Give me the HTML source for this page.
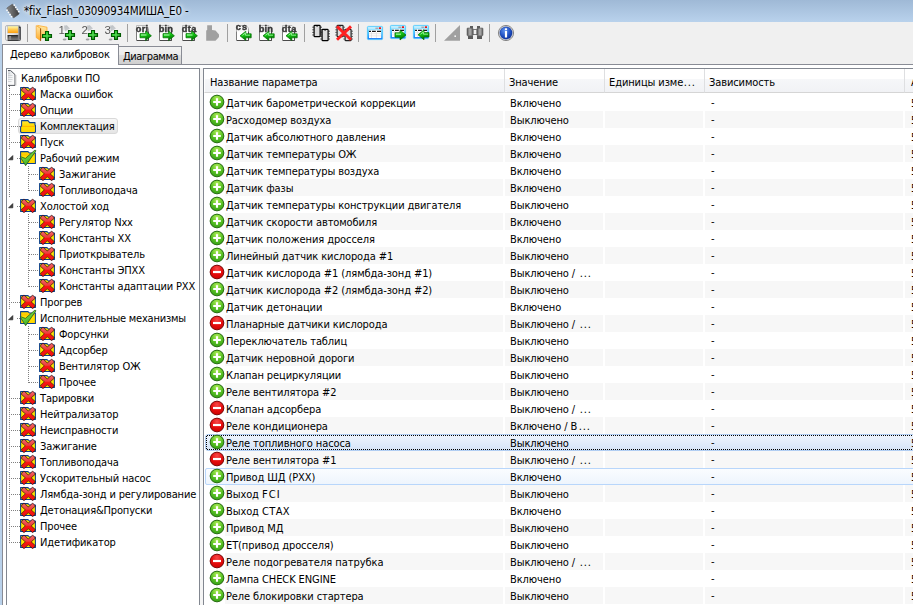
<!DOCTYPE html><html lang="ru"><head><meta charset="utf-8"><title>fix_Flash</title><style>
*{box-sizing:border-box}
html,body{margin:0;padding:0}
body{width:913px;height:605px;overflow:hidden;background:#f0f0f0;position:relative;font-family:"DejaVu Sans Condensed","Liberation Sans",sans-serif;font-size:11px;color:#000;letter-spacing:-0.15px;line-height:13px}
.abs{position:absolute}
#title{left:0;top:0;width:913px;height:22px;background:linear-gradient(#9fb9d6,#b9d2ec)}
#lb{left:0;top:22px;width:2px;height:583px;background:#b9d1ea}
#ttext{left:24px;top:4px;font-family:"DejaVu Sans Condensed","Liberation Sans",sans-serif;font-size:11.5px;letter-spacing:-0.12px;line-height:15px;white-space:nowrap;text-shadow:0 0 4px #fff,0 0 6px #fff}
.sep{position:absolute;top:24px;width:1px;height:18px;background:#a0a0a0}
.tb{position:absolute;top:25px;width:16px;height:16px}
#page{left:2px;top:64px;width:920px;height:560px;background:#fff;border:1px solid #898c95}
#tab1{left:2px;top:44px;width:117px;height:21px;background:#fff;border:1px solid #898c95;border-bottom:none}
#tab2{left:118px;top:46px;width:64px;height:18px;border:1px solid #898c95;border-bottom:none;background:linear-gradient(#f2f2f2 0,#ebebeb 50%,#dddddd 50%,#cfcfcf 100%)}
.tt{position:absolute;white-space:nowrap}
#tree{left:6px;top:68px;width:194px;height:560px;border:1px solid #828790;background:#fff;overflow:hidden}
#list{letter-spacing:-0.1px;left:203px;top:68px;width:730px;height:560px;border:1px solid #828790;background:#fff;overflow:hidden}
.ti{position:absolute;height:16px;white-space:nowrap;line-height:16px;margin:1px 0 0 -1px}
.ic{position:absolute;display:block}
.li{position:absolute;display:block;left:5px}
.hd{position:absolute;top:0;height:24px;background:linear-gradient(#fff 0,#fff 43%,#f6f7f9 43%,#f1f2f5 100%);border-bottom:1px solid #d5d5d5;border-left:1px solid #dedfe1;padding:7px 0 0 4px;white-space:nowrap;overflow:hidden}
.row{position:absolute;left:0;height:17px;width:720px}
.c{position:absolute;top:0;height:17px;padding-top:3px;white-space:nowrap;overflow:hidden}
.alt .c{background:#f7f7f7}
.el{letter-spacing:.85px;margin-left:1.6px}
.vl{position:absolute;width:1px;background-image:linear-gradient(#808080 50%,transparent 50%);background-size:1px 2px}
.hl{position:absolute;height:1px;background-image:linear-gradient(90deg,#808080 50%,transparent 50%);background-size:2px 1px}
</style></head><body>
<svg width="0" height="0" style="position:absolute"><defs><radialGradient id="gp" cx=".5" cy=".25" r=".8"><stop offset="0" stop-color="#b4ee5a"/><stop offset=".5" stop-color="#5cc326"/><stop offset="1" stop-color="#2f9a12"/></radialGradient><radialGradient id="gm" cx=".5" cy=".25" r=".8"><stop offset="0" stop-color="#f64a4a"/><stop offset=".5" stop-color="#e80e0e"/><stop offset="1" stop-color="#c80000"/></radialGradient><linearGradient id="gfl" x1="0" y1="0" x2="1" y2="0"><stop offset="0" stop-color="#f6f6f6"/><stop offset=".55" stop-color="#d0d2d6"/><stop offset="1" stop-color="#5e5e62"/></linearGradient><linearGradient id="gor" x1="0" y1="0" x2="0" y2="1"><stop offset="0" stop-color="#ffffb4"/><stop offset=".5" stop-color="#ffc850"/><stop offset="1" stop-color="#ff9c08"/></linearGradient><linearGradient id="gdk" x1="0" y1="0" x2="0" y2="1"><stop offset="0" stop-color="#1c1c1c"/><stop offset=".3" stop-color="#4a4a4a"/><stop offset=".8" stop-color="#7a7a7a"/><stop offset="1" stop-color="#202020"/></linearGradient><linearGradient id="gfo" x1="0" y1="0" x2="0" y2="1"><stop offset="0" stop-color="#ffe9a8"/><stop offset="1" stop-color="#ffa826"/></linearGradient><linearGradient id="gfb" x1="0" y1="0" x2="0" y2="1"><stop offset="0" stop-color="#ffe6a0"/><stop offset="1" stop-color="#ffc45a"/></linearGradient><linearGradient id="ggr" x1="0" y1="0" x2="1" y2="1"><stop offset="0" stop-color="#30e430"/><stop offset=".5" stop-color="#0cb40c"/><stop offset="1" stop-color="#006400"/></linearGradient><linearGradient id="gwin" x1="0" y1="0" x2="0" y2="1"><stop offset="0" stop-color="#a8eaff"/><stop offset=".5" stop-color="#48c4ff"/><stop offset="1" stop-color="#1c78f8"/></linearGradient><linearGradient id="gbn" x1="0" y1="0" x2="1" y2="0"><stop offset="0" stop-color="#5a5a5a"/><stop offset=".5" stop-color="#b0b0b0"/><stop offset="1" stop-color="#626262"/></linearGradient><radialGradient id="ginf" cx=".4" cy=".3" r=".8"><stop offset="0" stop-color="#5c90ee"/><stop offset=".6" stop-color="#1c4cc0"/><stop offset="1" stop-color="#0c2c90"/></radialGradient><linearGradient id="gpg" x1="0" y1="0" x2="1" y2="1"><stop offset="0" stop-color="#c2c8ce"/><stop offset=".5" stop-color="#f4f5f6"/><stop offset="1" stop-color="#ffffff"/></linearGradient><linearGradient id="gchk" x1="0" y1="0" x2=".6" y2="1"><stop offset="0" stop-color="#b4f45c"/><stop offset=".5" stop-color="#68d03a"/><stop offset="1" stop-color="#36a020"/></linearGradient><linearGradient id="gx" x1="0" y1="0" x2="0" y2="1"><stop offset="0" stop-color="#f26a6a"/><stop offset=".45" stop-color="#ee3a3a"/><stop offset=".55" stop-color="#f81414"/><stop offset="1" stop-color="#f01010"/></linearGradient><linearGradient id="gfy" x1="0" y1="0" x2="0" y2="1"><stop offset="0" stop-color="#ffe83a"/><stop offset=".42" stop-color="#ffd800"/><stop offset=".5" stop-color="#ffb400"/><stop offset=".58" stop-color="#ffdc00"/><stop offset="1" stop-color="#ffd400"/></linearGradient><linearGradient id="gchip" x1="0" y1="0" x2="1" y2="1"><stop offset="0" stop-color="#8a8a8a"/><stop offset="1" stop-color="#3a3a3a"/></linearGradient><linearGradient id="gfy2" x1="0" y1="0" x2="0" y2="1"><stop offset="0" stop-color="#ffe000"/><stop offset=".3" stop-color="#ffc400"/><stop offset=".4" stop-color="#ffe400"/><stop offset="1" stop-color="#ffd400"/></linearGradient><linearGradient id="gar" x1="0" y1="0" x2=".3" y2="1"><stop offset="0" stop-color="#58f058"/><stop offset=".5" stop-color="#12c412"/><stop offset="1" stop-color="#007000"/></linearGradient><linearGradient id="gpg2" x1="0" y1="0" x2=".4" y2="1"><stop offset="0" stop-color="#c4c8cc"/><stop offset=".45" stop-color="#f8f8f8"/><stop offset="1" stop-color="#e0e2e4"/></linearGradient></defs></svg>
<div id="title" class="abs"></div><div id="lb" class="abs"></div>
<svg class="abs" style="left:5.5px;top:4px;overflow:visible" width="14" height="14" viewBox="0 0 14 14"><g transform="rotate(-35 7 7)"><rect x="3.2" y="1" width="7.6" height="12" rx="1.2" fill="url(#gchip)" stroke="#5a5a5a" stroke-width=".5"/><rect x="1.7" y="2.2" width="1.7" height="1.5" rx=".5" fill="#fafafa"/><rect x="10.6" y="2.2" width="1.7" height="1.5" rx=".5" fill="#fafafa"/><rect x="1.7" y="4.8" width="1.7" height="1.5" rx=".5" fill="#fafafa"/><rect x="10.6" y="4.8" width="1.7" height="1.5" rx=".5" fill="#fafafa"/><rect x="1.7" y="7.4" width="1.7" height="1.5" rx=".5" fill="#fafafa"/><rect x="10.6" y="7.4" width="1.7" height="1.5" rx=".5" fill="#fafafa"/><rect x="1.7" y="10" width="1.7" height="1.5" rx=".5" fill="#fafafa"/><rect x="10.6" y="10" width="1.7" height="1.5" rx=".5" fill="#fafafa"/></g></svg>
<div id="ttext" class="abs">*fix_Flash_03090934МИША_Е0 -</div>
<svg class="abs" style="left:5px;top:25px;overflow:visible" width="16" height="16" viewBox="0 0 16 16"><rect x=".5" y=".5" width="15" height="15" rx="1.6" fill="url(#gfl)" stroke="#b4b6ba"/><path d="M15.5 2 V14.5 Q15.5 15.5 14.5 15.5 H3" fill="none" stroke="#55565a" stroke-width="1"/><rect x="2.6" y="1" width="10.6" height="7.2" fill="url(#gor)" stroke="#b0b4bc" stroke-width=".5"/><path d="M2 9 H13.6" stroke="#f4f4f4" stroke-width="1"/><rect x="2.5" y="10" width="10.4" height="5.5" fill="url(#gdk)"/><rect x="4.1" y="11" width="2" height="4" fill="#8a8a8a"/><rect x="14" y="1.8" width="1" height="1" fill="#222"/></svg>
<svg class="abs" style="left:36px;top:25px;overflow:visible" width="16" height="16" viewBox="0 0 16 16"><path d="M1.6 0.4 L11 2.2 V12.6 L4.6 13 Z" fill="url(#gfb)" stroke="#ffab2a" stroke-width=".8"/><path d="M0.2 0.6 L4.6 3.4 V15.8 L0.2 12.6 Z" fill="url(#gfo)" stroke="#f59a18" stroke-width=".6"/><path d="M4.6 3.4 V15.8" stroke="#7a3a00" stroke-width=".8"/><path d="M9.5 6.5 h3 v3 h3 v3 h-3 v3 h-3 v-3 h-3 v-3 h3 z" fill="url(#ggr)" stroke="#005a00" stroke-width="1.1" stroke-linejoin="miter"/><path d="M11 7.5 v7 M7.5 11 h7" stroke="#b0f8b0" stroke-width=".9" opacity=".6"/></svg>
<svg class="abs" style="left:59px;top:25px;overflow:visible" width="16" height="16" viewBox="0 0 16 16"><path d="M4.4 2.8 L7.8 0.2 L13.8 6.6 L6.8 14.8 L2.8 9.6 Z" fill="url(#gpg2)"/><path d="M5 0.6 L7.8 0.2 L11 3.6 L6 6.4 Z" fill="#b4b8bc" opacity=".7"/><ellipse cx="5.6" cy="14.4" rx="1.9" ry="1" fill="#8c8c90" opacity=".8"/><text x="-0.6" y="8.8" font-family="'Liberation Sans',sans-serif" font-size="11.5" fill="#585858" letter-spacing="0" style="filter:grayscale(1)">1</text><path d="M9.5 5.5 h3 v3 h3 v3 h-3 v3 h-3 v-3 h-3 v-3 h3 z" fill="url(#ggr)" stroke="#005a00" stroke-width="1.1" stroke-linejoin="miter"/><path d="M11 6.5 v7 M7.5 10 h7" stroke="#b0f8b0" stroke-width=".9" opacity=".6"/></svg>
<svg class="abs" style="left:82px;top:25px;overflow:visible" width="16" height="16" viewBox="0 0 16 16"><path d="M4.4 2.8 L7.8 0.2 L13.8 6.6 L6.8 14.8 L2.8 9.6 Z" fill="url(#gpg2)"/><path d="M5 0.6 L7.8 0.2 L11 3.6 L6 6.4 Z" fill="#b4b8bc" opacity=".7"/><ellipse cx="5.6" cy="14.4" rx="1.9" ry="1" fill="#8c8c90" opacity=".8"/><text x="-0.6" y="8.8" font-family="'Liberation Sans',sans-serif" font-size="11.5" fill="#585858" letter-spacing="0" style="filter:grayscale(1)">2</text><path d="M9.5 5.5 h3 v3 h3 v3 h-3 v3 h-3 v-3 h-3 v-3 h3 z" fill="url(#ggr)" stroke="#005a00" stroke-width="1.1" stroke-linejoin="miter"/><path d="M11 6.5 v7 M7.5 10 h7" stroke="#b0f8b0" stroke-width=".9" opacity=".6"/></svg>
<svg class="abs" style="left:105px;top:25px;overflow:visible" width="16" height="16" viewBox="0 0 16 16"><path d="M4.4 2.8 L7.8 0.2 L13.8 6.6 L6.8 14.8 L2.8 9.6 Z" fill="url(#gpg2)"/><path d="M5 0.6 L7.8 0.2 L11 3.6 L6 6.4 Z" fill="#b4b8bc" opacity=".7"/><ellipse cx="5.6" cy="14.4" rx="1.9" ry="1" fill="#8c8c90" opacity=".8"/><text x="-0.6" y="8.8" font-family="'Liberation Sans',sans-serif" font-size="11.5" fill="#585858" letter-spacing="0" style="filter:grayscale(1)">3</text><path d="M9.5 5.5 h3 v3 h3 v3 h-3 v3 h-3 v-3 h-3 v-3 h3 z" fill="url(#ggr)" stroke="#005a00" stroke-width="1.1" stroke-linejoin="miter"/><path d="M11 6.5 v7 M7.5 10 h7" stroke="#b0f8b0" stroke-width=".9" opacity=".6"/></svg>
<svg class="abs" style="left:136px;top:25px;overflow:visible" width="16" height="16" viewBox="0 0 16 16"><path d="M0.5 0.5 H10 L12.5 3 V15.5 H0.5 Z" fill="#fff" stroke="#7c7c7c" stroke-width="1"/><path d="M12.5 4 V15.5 H1" fill="none" stroke="#4a4a4a" stroke-width="1"/><rect x="-0.5" y="0" width="14" height="6.6" fill="#f0f0f0" opacity=".55"/><text x="-0.2" y="6.8" font-family="'Liberation Sans',sans-serif" font-weight="bold" font-size="9.2" fill="#383838" stroke="#383838" stroke-width=".45" letter-spacing="0.3" style="filter:grayscale(1)">ori</text><path d="M4 8.6 H9.6 V6 L15.4 10.8 L9.6 15.6 V12.8 H4 Z" fill="url(#gar)" stroke="#006c00" stroke-width=".7" stroke-linejoin="round"/><path d="M5 10 H10.5" stroke="#c0ffc0" stroke-width="1.2" opacity=".8"/></svg>
<svg class="abs" style="left:159px;top:25px;overflow:visible" width="16" height="16" viewBox="0 0 16 16"><path d="M0.5 0.5 H10 L12.5 3 V15.5 H0.5 Z" fill="#fff" stroke="#7c7c7c" stroke-width="1"/><path d="M12.5 4 V15.5 H1" fill="none" stroke="#4a4a4a" stroke-width="1"/><rect x="-0.5" y="0" width="14" height="6.6" fill="#f0f0f0" opacity=".55"/><text x="-0.2" y="6.8" font-family="'Liberation Sans',sans-serif" font-weight="bold" font-size="9.2" fill="#383838" stroke="#383838" stroke-width=".45" letter-spacing="0.1" style="filter:grayscale(1)">bin</text><path d="M4 8.6 H9.6 V6 L15.4 10.8 L9.6 15.6 V12.8 H4 Z" fill="url(#gar)" stroke="#006c00" stroke-width=".7" stroke-linejoin="round"/><path d="M5 10 H10.5" stroke="#c0ffc0" stroke-width="1.2" opacity=".8"/></svg>
<svg class="abs" style="left:182px;top:25px;overflow:visible" width="16" height="16" viewBox="0 0 16 16"><path d="M0.5 0.5 H10 L12.5 3 V15.5 H0.5 Z" fill="#fff" stroke="#7c7c7c" stroke-width="1"/><path d="M12.5 4 V15.5 H1" fill="none" stroke="#4a4a4a" stroke-width="1"/><rect x="-0.5" y="0" width="14" height="6.6" fill="#f0f0f0" opacity=".55"/><text x="-0.2" y="6.8" font-family="'Liberation Sans',sans-serif" font-weight="bold" font-size="9.2" fill="#383838" stroke="#383838" stroke-width=".45" letter-spacing="0.4" style="filter:grayscale(1)">dta</text><path d="M4 8.6 H9.6 V6 L15.4 10.8 L9.6 15.6 V12.8 H4 Z" fill="url(#gar)" stroke="#006c00" stroke-width=".7" stroke-linejoin="round"/><path d="M5 10 H10.5" stroke="#c0ffc0" stroke-width="1.2" opacity=".8"/></svg>
<svg class="abs" style="left:205px;top:25px;overflow:visible" width="16" height="16" viewBox="0 0 16 16"><path d="M2.2 0.2 H7 V5 L10.5 5.4 L14 9.4 V12 L10.5 15.8 H1.2 V5.4 L2.2 5 Z" fill="#a0a0a0"/></svg>
<svg class="abs" style="left:236px;top:25px;overflow:visible" width="16" height="16" viewBox="0 0 16 16"><path d="M0.5 0.5 H10 L12.5 3 V15.5 H0.5 Z" fill="#fff" stroke="#7c7c7c" stroke-width="1"/><path d="M12.5 4 V15.5 H1" fill="none" stroke="#4a4a4a" stroke-width="1"/><rect x="-0.5" y="0" width="14" height="6.6" fill="#f0f0f0" opacity=".55"/><text x="-0.2" y="5.2" font-family="'Liberation Sans',sans-serif" font-weight="bold" font-size="9.2" fill="#383838" stroke="#383838" stroke-width=".45" letter-spacing="1.1" style="filter:grayscale(1)">cs</text><path d="M15.2 8.8 H9.8 V6.2 L4 10.8 L9.8 15.4 V12.8 H15.2 Z" fill="url(#gar)" stroke="#006c00" stroke-width=".7" stroke-linejoin="round"/><path d="M6.5 10.4 L9.4 8 V10.2 H14" stroke="#c0ffc0" stroke-width="1" opacity=".7" fill="none"/></svg>
<svg class="abs" style="left:259px;top:25px;overflow:visible" width="16" height="16" viewBox="0 0 16 16"><path d="M0.5 0.5 H10 L12.5 3 V15.5 H0.5 Z" fill="#fff" stroke="#7c7c7c" stroke-width="1"/><path d="M12.5 4 V15.5 H1" fill="none" stroke="#4a4a4a" stroke-width="1"/><rect x="-0.5" y="0" width="14" height="6.6" fill="#f0f0f0" opacity=".55"/><text x="-0.2" y="6.8" font-family="'Liberation Sans',sans-serif" font-weight="bold" font-size="9.2" fill="#383838" stroke="#383838" stroke-width=".45" letter-spacing="0.1" style="filter:grayscale(1)">bin</text><path d="M15.2 8.8 H9.8 V6.2 L4 10.8 L9.8 15.4 V12.8 H15.2 Z" fill="url(#gar)" stroke="#006c00" stroke-width=".7" stroke-linejoin="round"/><path d="M6.5 10.4 L9.4 8 V10.2 H14" stroke="#c0ffc0" stroke-width="1" opacity=".7" fill="none"/></svg>
<svg class="abs" style="left:282px;top:25px;overflow:visible" width="16" height="16" viewBox="0 0 16 16"><path d="M0.5 0.5 H10 L12.5 3 V15.5 H0.5 Z" fill="#fff" stroke="#7c7c7c" stroke-width="1"/><path d="M12.5 4 V15.5 H1" fill="none" stroke="#4a4a4a" stroke-width="1"/><rect x="-0.5" y="0" width="14" height="6.6" fill="#f0f0f0" opacity=".55"/><text x="-0.2" y="6.8" font-family="'Liberation Sans',sans-serif" font-weight="bold" font-size="9.2" fill="#383838" stroke="#383838" stroke-width=".45" letter-spacing="0.4" style="filter:grayscale(1)">dta</text><path d="M15.2 8.8 H9.8 V6.2 L4 10.8 L9.8 15.4 V12.8 H15.2 Z" fill="url(#gar)" stroke="#006c00" stroke-width=".7" stroke-linejoin="round"/><path d="M6.5 10.4 L9.4 8 V10.2 H14" stroke="#c0ffc0" stroke-width="1" opacity=".7" fill="none"/></svg>
<svg class="abs" style="left:313px;top:25px;overflow:visible" width="16" height="16" viewBox="0 0 16 16"><rect x="0" y="-0.5" width="16" height="17" fill="#fff" opacity=".0"/><rect x="1.1" y="0.3" width="6" height="11.4" rx=".8" fill="#dcdcdc" stroke="#000" stroke-width="1.2"/><path d="M3.3 0.4 h1.6 v1 h-1.6z" fill="#000"/><path d="M0.6 2.2 h-1.1 M7.6 2.2 h1.1" stroke="#000" stroke-width="1"/><path d="M0.6 4.8 h-1.1 M7.6 4.8 h1.1" stroke="#000" stroke-width="1"/><path d="M0.6 7.4 h-1.1 M7.6 7.4 h1.1" stroke="#000" stroke-width="1"/><path d="M0.6 10 h-1.1 M7.6 10 h1.1" stroke="#000" stroke-width="1"/><rect x="9.1" y="4.3" width="6" height="11.4" rx=".8" fill="#dcdcdc" stroke="#000" stroke-width="1.2"/><path d="M11.3 4.4 h1.6 v1 h-1.6z" fill="#000"/><path d="M8.6 6.2 h-1.1 M15.6 6.2 h1.1" stroke="#000" stroke-width="1"/><path d="M8.6 8.8 h-1.1 M15.6 8.8 h1.1" stroke="#000" stroke-width="1"/><path d="M8.6 11.4 h-1.1 M15.6 11.4 h1.1" stroke="#000" stroke-width="1"/><path d="M8.6 14 h-1.1 M15.6 14 h1.1" stroke="#000" stroke-width="1"/></svg>
<svg class="abs" style="left:336px;top:25px;overflow:visible" width="16" height="16" viewBox="0 0 16 16"><g opacity=".85"><rect x="0" y="-0.5" width="16" height="17" fill="#fff" opacity=".0"/><rect x="1.1" y="0.3" width="6" height="11.4" rx=".8" fill="#dcdcdc" stroke="#000" stroke-width="1.2"/><path d="M3.3 0.4 h1.6 v1 h-1.6z" fill="#000"/><path d="M0.6 2.2 h-1.1 M7.6 2.2 h1.1" stroke="#000" stroke-width="1"/><path d="M0.6 4.8 h-1.1 M7.6 4.8 h1.1" stroke="#000" stroke-width="1"/><path d="M0.6 7.4 h-1.1 M7.6 7.4 h1.1" stroke="#000" stroke-width="1"/><path d="M0.6 10 h-1.1 M7.6 10 h1.1" stroke="#000" stroke-width="1"/><rect x="9.1" y="4.3" width="6" height="11.4" rx=".8" fill="#dcdcdc" stroke="#000" stroke-width="1.2"/><path d="M11.3 4.4 h1.6 v1 h-1.6z" fill="#000"/><path d="M8.6 6.2 h-1.1 M15.6 6.2 h1.1" stroke="#000" stroke-width="1"/><path d="M8.6 8.8 h-1.1 M15.6 8.8 h1.1" stroke="#000" stroke-width="1"/><path d="M8.6 11.4 h-1.1 M15.6 11.4 h1.1" stroke="#000" stroke-width="1"/><path d="M8.6 14 h-1.1 M15.6 14 h1.1" stroke="#000" stroke-width="1"/></g><path d="M1 1.4 L15 14.8 M15 1.4 L1 14.8" stroke="#ff2020" stroke-width="2.9" stroke-linecap="butt"/></svg>
<svg class="abs" style="left:367px;top:25px;overflow:visible" width="16" height="16" viewBox="0 0 16 16"><rect x="0.4" y="1.4" width="15.2" height="13.2" rx="1" fill="url(#gwin)" stroke="#46c6ff" stroke-width=".8"/><rect x="1.2" y="2" width="13.6" height="2.6" fill="#e4f8ff" opacity=".55"/><rect x="2" y="5.2" width="12.2" height="7.8" fill="#fff"/><path d="M2 6.4 h2 M5 6.4 h3.8 M10 6.4 h4" stroke="#181818" stroke-width="1.1"/><path d="M2 8.7 h12 M2 10.9 h12 M4.5 7 v6 M9.4 7 v6" stroke="#d8d8d8" stroke-width=".6"/><rect x="12" y="2.3" width="2" height="1.6" rx=".4" fill="#f00000"/><path d="M8.4 3.2 h3" stroke="#a08080" stroke-width=".9"/></svg>
<svg class="abs" style="left:390px;top:25px;overflow:visible" width="16" height="16" viewBox="0 0 16 16"><rect x="0.4" y="0.4" width="15.2" height="13.2" rx="1" fill="url(#gwin)" stroke="#46c6ff" stroke-width=".8"/><rect x="1.2" y="1" width="13.6" height="2.6" fill="#e4f8ff" opacity=".55"/><rect x="2" y="4.2" width="12.2" height="7.8" fill="#fff"/><path d="M2 5.4 h2 M5 5.4 h3.8 M10 5.4 h4" stroke="#181818" stroke-width="1.1"/><path d="M2 7.7 h12 M2 9.9 h12 M4.5 6 v6 M9.4 6 v6" stroke="#d8d8d8" stroke-width=".6"/><rect x="12" y="1.3" width="2" height="1.6" rx=".4" fill="#f00000"/><path d="M8.4 2.2 h3" stroke="#a08080" stroke-width=".9"/><path d="M5 7.8 H10 V5 L16 10 L10 15 V12.2 H5 Z" fill="url(#gar)" stroke="#006c00" stroke-width=".7" stroke-linejoin="round"/><path d="M6 9.2 H11" stroke="#c0ffc0" stroke-width="1.2" opacity=".8"/></svg>
<svg class="abs" style="left:413px;top:25px;overflow:visible" width="16" height="16" viewBox="0 0 16 16"><rect x="0.4" y="0.4" width="15.2" height="13.2" rx="1" fill="url(#gwin)" stroke="#46c6ff" stroke-width=".8"/><rect x="1.2" y="1" width="13.6" height="2.6" fill="#e4f8ff" opacity=".55"/><rect x="2" y="4.2" width="12.2" height="7.8" fill="#fff"/><path d="M2 5.4 h2 M5 5.4 h3.8 M10 5.4 h4" stroke="#181818" stroke-width="1.1"/><path d="M2 7.7 h12 M2 9.9 h12 M4.5 6 v6 M9.4 6 v6" stroke="#d8d8d8" stroke-width=".6"/><rect x="12" y="1.3" width="2" height="1.6" rx=".4" fill="#f00000"/><path d="M8.4 2.2 h3" stroke="#a08080" stroke-width=".9"/><path d="M16 7.6 H11 V4.8 L5 9.8 L11 14.8 V12 H16 Z" fill="url(#gar)" stroke="#006c00" stroke-width=".7" stroke-linejoin="round"/><path d="M7.5 9.4 L10.4 7 V9.2 H15" stroke="#c0ffc0" stroke-width="1" opacity=".7" fill="none"/></svg>
<svg class="abs" style="left:444px;top:25px;overflow:visible" width="16" height="16" viewBox="0 0 16 16"><path d="M16 0 V15.8 H0 Z" fill="#a0a0a0"/><rect x="10.4" y="10.4" width="1.6" height="1.6" fill="#f4f4f4"/></svg>
<svg class="abs" style="left:466px;top:25px;overflow:visible" width="16" height="16" viewBox="0 0 16 16"><rect x="1" y="3" width="6" height="7.8" rx=".8" fill="url(#gbn)" stroke="#4a4a4a" stroke-width=".5"/><rect x="4" y="1" width="3" height="2.2" fill="#5c5c5c"/><rect x="2" y="10.8" width="5" height="3.2" fill="#4c4c4c"/><path d="M2 11.8 h5 M2 13 h5" stroke="#7a7a7a" stroke-width=".5"/><rect x="11" y="3" width="6" height="7.8" rx=".8" fill="url(#gbn)" stroke="#4a4a4a" stroke-width=".5"/><rect x="11" y="1" width="3" height="2.2" fill="#5c5c5c"/><rect x="11" y="10.8" width="5" height="3.2" fill="#4c4c4c"/><path d="M11 11.8 h5 M11 13 h5" stroke="#7a7a7a" stroke-width=".5"/><rect x="7.2" y="4.6" width="3.6" height="5" fill="#f0f0f0" stroke="#5a5a5a" stroke-width=".8"/></svg>
<svg class="abs" style="left:498px;top:25px;overflow:visible" width="16" height="16" viewBox="0 0 16 16"><circle cx="8" cy="8" r="7.6" fill="#e4e4e4" stroke="#7c7c7c" stroke-width=".9"/><circle cx="8" cy="8" r="6.2" fill="url(#ginf)" stroke="#0c2c80" stroke-width=".4"/><rect x="6.9" y="3.2" width="2.2" height="2" rx=".6" fill="#fff"/><rect x="6.9" y="6" width="2.2" height="6.6" rx=".3" fill="#fff"/></svg>
<div class="sep" style="left:27px"></div>
<div class="sep" style="left:127px"></div>
<div class="sep" style="left:227px"></div>
<div class="sep" style="left:304px"></div>
<div class="sep" style="left:358px"></div>
<div class="sep" style="left:435px"></div>
<div class="sep" style="left:489px"></div>
<div id="page" class="abs"></div>
<div id="tab2" class="abs"><span class="tt" style="left:4px;top:3px;letter-spacing:-0.4px">Диаграмма</span></div>
<div id="tab1" class="abs"><span class="tt" style="left:7px;top:3px">Дерево калибровок</span></div>
<div class="abs" style="left:200px;top:68px;width:3px;height:540px;background:#f5f5f5"></div>
<div id="tree" class="abs">
<svg class="abs" style="left:1px;top:1px;overflow:hidden" width="9" height="16" viewBox="0 0 9 16"><path d="M-2 .5 H2.6 L7 4.6 V15.4 H-2 Z" fill="url(#gpg)" stroke="#54585e" stroke-width="1"/><path d="M8 5 V15.6" stroke="#d0d0d0" stroke-width=".9"/><path d="M0 3.5 h2 M0 5.5 h4.5 M0 7.5 h4.5 M0 9.5 h4.5 M0 11.5 h3.5" stroke="#c4c8cc" stroke-width=".7"/></svg>
<div class="vl" style="left:2px;top:17px;height:64px"></div>
<div class="vl" style="left:2px;top:97px;height:32px"></div>
<div class="vl" style="left:2px;top:145px;height:96px"></div>
<div class="vl" style="left:2px;top:257px;height:217px"></div>
<div class="ti" style="left:15px;top:1px">Калибровки ПО</div>
<div class="hl" style="left:4px;top:25px;width:9px"></div>
<svg class="ic" style="left:13px;top:17px" width="16" height="16" viewBox="0 0 16 16"><path d="M0.6 1.6 H8 L9.4 3 H15.4 V13.4 H0.6 Z" fill="#ffe400" stroke="#0a3f8f" stroke-width="1.05" stroke-linejoin="round"/><path d="M3.97 1.54 L14.94 11.77 L12.63 14.26 L1.66 4.03 Z M1.66 11.77 L12.63 1.54 L14.94 4.03 L3.97 14.26 Z" fill="#300000" stroke="#300000" stroke-width="1.4" stroke-linejoin="round" opacity=".75"/><path d="M3.97 1.54 L14.94 11.77 L12.63 14.26 L1.66 4.03 Z M1.66 11.77 L12.63 1.54 L14.94 4.03 L3.97 14.26 Z" fill="url(#gx)"/></svg>
<div class="ti" style="left:34px;top:17px">Маска ошибок</div>
<div class="hl" style="left:4px;top:41px;width:9px"></div>
<svg class="ic" style="left:13px;top:33px" width="16" height="16" viewBox="0 0 16 16"><path d="M0.6 1.6 H8 L9.4 3 H15.4 V13.4 H0.6 Z" fill="#ffe400" stroke="#0a3f8f" stroke-width="1.05" stroke-linejoin="round"/><path d="M3.97 1.54 L14.94 11.77 L12.63 14.26 L1.66 4.03 Z M1.66 11.77 L12.63 1.54 L14.94 4.03 L3.97 14.26 Z" fill="#300000" stroke="#300000" stroke-width="1.4" stroke-linejoin="round" opacity=".75"/><path d="M3.97 1.54 L14.94 11.77 L12.63 14.26 L1.66 4.03 Z M1.66 11.77 L12.63 1.54 L14.94 4.03 L3.97 14.26 Z" fill="url(#gx)"/></svg>
<div class="ti" style="left:34px;top:33px">Опции</div>
<div class="abs" style="left:11px;top:49px;width:100px;height:16px;border:1px solid #d9d9d9;border-radius:3px;background:linear-gradient(#f8f8f8,#e5e5e5)"></div>
<div class="hl" style="left:4px;top:57px;width:9px"></div>
<svg class="ic" style="left:13px;top:49px" width="16" height="16" viewBox="0 0 16 16"><path d="M1.6 2.6 H8 L9.6 4.6 H15 V7 L15.5 7.4 V13.6 L15 14.4 H1.2 L0.6 13.6 V8.6 L1.6 8 Z" fill="url(#gfy)" stroke="#0a3f8f" stroke-width="1.05" stroke-linejoin="round"/></svg>
<div class="ti" style="left:34px;top:49px">Комплектация</div>
<div class="hl" style="left:4px;top:73px;width:9px"></div>
<svg class="ic" style="left:13px;top:65px" width="16" height="16" viewBox="0 0 16 16"><path d="M0.6 1.6 H8 L9.4 3 H15.4 V13.4 H0.6 Z" fill="#ffe400" stroke="#0a3f8f" stroke-width="1.05" stroke-linejoin="round"/><path d="M3.97 1.54 L14.94 11.77 L12.63 14.26 L1.66 4.03 Z M1.66 11.77 L12.63 1.54 L14.94 4.03 L3.97 14.26 Z" fill="#300000" stroke="#300000" stroke-width="1.4" stroke-linejoin="round" opacity=".75"/><path d="M3.97 1.54 L14.94 11.77 L12.63 14.26 L1.66 4.03 Z M1.66 11.77 L12.63 1.54 L14.94 4.03 L3.97 14.26 Z" fill="url(#gx)"/></svg>
<div class="ti" style="left:34px;top:65px">Пуск</div>
<div class="hl" style="left:10px;top:89px;width:3px"></div>
<svg class="abs" style="left:1px;top:86px" width="6" height="6" viewBox="0 0 6 6"><path d="M4.8 0.6 V4.8 H0.6 Z" fill="#404040" stroke="#262626" stroke-width=".7" stroke-linejoin="round"/></svg>
<svg class="ic" width="16" height="16" viewBox="0 0 16 16" style="left:13px;top:81px;overflow:visible"><path d="M0.6 1.6 H8 L9.4 3 H15.4 V13.4 H0.6 Z" fill="url(#gfy2)" stroke="#0a3f8f" stroke-width="1.05" stroke-linejoin="round"/><path d="M0.3 6.6 L5.4 8.4 L15 0 L16 0.8 L5.6 15.7 L0.6 7.6 Z" fill="url(#gchk)" stroke="#1c4a10" stroke-width=".7" stroke-linejoin="round"/></svg>
<div class="ti" style="left:34px;top:81px">Рабочий режим</div>
<div class="hl" style="left:22px;top:105px;width:10px"></div>
<svg class="ic" style="left:32px;top:97px" width="16" height="16" viewBox="0 0 16 16"><path d="M0.6 1.6 H8 L9.4 3 H15.4 V13.4 H0.6 Z" fill="#ffe400" stroke="#0a3f8f" stroke-width="1.05" stroke-linejoin="round"/><path d="M3.97 1.54 L14.94 11.77 L12.63 14.26 L1.66 4.03 Z M1.66 11.77 L12.63 1.54 L14.94 4.03 L3.97 14.26 Z" fill="#300000" stroke="#300000" stroke-width="1.4" stroke-linejoin="round" opacity=".75"/><path d="M3.97 1.54 L14.94 11.77 L12.63 14.26 L1.66 4.03 Z M1.66 11.77 L12.63 1.54 L14.94 4.03 L3.97 14.26 Z" fill="url(#gx)"/></svg>
<div class="ti" style="left:53px;top:97px">Зажигание</div>
<div class="hl" style="left:22px;top:121px;width:10px"></div>
<svg class="ic" style="left:32px;top:113px" width="16" height="16" viewBox="0 0 16 16"><path d="M0.6 1.6 H8 L9.4 3 H15.4 V13.4 H0.6 Z" fill="#ffe400" stroke="#0a3f8f" stroke-width="1.05" stroke-linejoin="round"/><path d="M3.97 1.54 L14.94 11.77 L12.63 14.26 L1.66 4.03 Z M1.66 11.77 L12.63 1.54 L14.94 4.03 L3.97 14.26 Z" fill="#300000" stroke="#300000" stroke-width="1.4" stroke-linejoin="round" opacity=".75"/><path d="M3.97 1.54 L14.94 11.77 L12.63 14.26 L1.66 4.03 Z M1.66 11.77 L12.63 1.54 L14.94 4.03 L3.97 14.26 Z" fill="url(#gx)"/></svg>
<div class="ti" style="left:53px;top:113px">Топливоподача</div>
<div class="hl" style="left:10px;top:137px;width:3px"></div>
<svg class="abs" style="left:1px;top:134px" width="6" height="6" viewBox="0 0 6 6"><path d="M4.8 0.6 V4.8 H0.6 Z" fill="#404040" stroke="#262626" stroke-width=".7" stroke-linejoin="round"/></svg>
<svg class="ic" style="left:13px;top:129px" width="16" height="16" viewBox="0 0 16 16"><path d="M0.6 1.6 H8 L9.4 3 H15.4 V13.4 H0.6 Z" fill="#ffe400" stroke="#0a3f8f" stroke-width="1.05" stroke-linejoin="round"/><path d="M3.97 1.54 L14.94 11.77 L12.63 14.26 L1.66 4.03 Z M1.66 11.77 L12.63 1.54 L14.94 4.03 L3.97 14.26 Z" fill="#300000" stroke="#300000" stroke-width="1.4" stroke-linejoin="round" opacity=".75"/><path d="M3.97 1.54 L14.94 11.77 L12.63 14.26 L1.66 4.03 Z M1.66 11.77 L12.63 1.54 L14.94 4.03 L3.97 14.26 Z" fill="url(#gx)"/></svg>
<div class="ti" style="left:34px;top:129px">Холостой ход</div>
<div class="hl" style="left:22px;top:153px;width:10px"></div>
<svg class="ic" style="left:32px;top:145px" width="16" height="16" viewBox="0 0 16 16"><path d="M0.6 1.6 H8 L9.4 3 H15.4 V13.4 H0.6 Z" fill="#ffe400" stroke="#0a3f8f" stroke-width="1.05" stroke-linejoin="round"/><path d="M3.97 1.54 L14.94 11.77 L12.63 14.26 L1.66 4.03 Z M1.66 11.77 L12.63 1.54 L14.94 4.03 L3.97 14.26 Z" fill="#300000" stroke="#300000" stroke-width="1.4" stroke-linejoin="round" opacity=".75"/><path d="M3.97 1.54 L14.94 11.77 L12.63 14.26 L1.66 4.03 Z M1.66 11.77 L12.63 1.54 L14.94 4.03 L3.97 14.26 Z" fill="url(#gx)"/></svg>
<div class="ti" style="left:53px;top:145px">Регулятор Nxx</div>
<div class="hl" style="left:22px;top:169px;width:10px"></div>
<svg class="ic" style="left:32px;top:161px" width="16" height="16" viewBox="0 0 16 16"><path d="M0.6 1.6 H8 L9.4 3 H15.4 V13.4 H0.6 Z" fill="#ffe400" stroke="#0a3f8f" stroke-width="1.05" stroke-linejoin="round"/><path d="M3.97 1.54 L14.94 11.77 L12.63 14.26 L1.66 4.03 Z M1.66 11.77 L12.63 1.54 L14.94 4.03 L3.97 14.26 Z" fill="#300000" stroke="#300000" stroke-width="1.4" stroke-linejoin="round" opacity=".75"/><path d="M3.97 1.54 L14.94 11.77 L12.63 14.26 L1.66 4.03 Z M1.66 11.77 L12.63 1.54 L14.94 4.03 L3.97 14.26 Z" fill="url(#gx)"/></svg>
<div class="ti" style="left:53px;top:161px">Константы ХХ</div>
<div class="hl" style="left:22px;top:185px;width:10px"></div>
<svg class="ic" style="left:32px;top:177px" width="16" height="16" viewBox="0 0 16 16"><path d="M0.6 1.6 H8 L9.4 3 H15.4 V13.4 H0.6 Z" fill="#ffe400" stroke="#0a3f8f" stroke-width="1.05" stroke-linejoin="round"/><path d="M3.97 1.54 L14.94 11.77 L12.63 14.26 L1.66 4.03 Z M1.66 11.77 L12.63 1.54 L14.94 4.03 L3.97 14.26 Z" fill="#300000" stroke="#300000" stroke-width="1.4" stroke-linejoin="round" opacity=".75"/><path d="M3.97 1.54 L14.94 11.77 L12.63 14.26 L1.66 4.03 Z M1.66 11.77 L12.63 1.54 L14.94 4.03 L3.97 14.26 Z" fill="url(#gx)"/></svg>
<div class="ti" style="left:53px;top:177px">Приоткрыватель</div>
<div class="hl" style="left:22px;top:201px;width:10px"></div>
<svg class="ic" style="left:32px;top:193px" width="16" height="16" viewBox="0 0 16 16"><path d="M0.6 1.6 H8 L9.4 3 H15.4 V13.4 H0.6 Z" fill="#ffe400" stroke="#0a3f8f" stroke-width="1.05" stroke-linejoin="round"/><path d="M3.97 1.54 L14.94 11.77 L12.63 14.26 L1.66 4.03 Z M1.66 11.77 L12.63 1.54 L14.94 4.03 L3.97 14.26 Z" fill="#300000" stroke="#300000" stroke-width="1.4" stroke-linejoin="round" opacity=".75"/><path d="M3.97 1.54 L14.94 11.77 L12.63 14.26 L1.66 4.03 Z M1.66 11.77 L12.63 1.54 L14.94 4.03 L3.97 14.26 Z" fill="url(#gx)"/></svg>
<div class="ti" style="left:53px;top:193px">Константы ЭПХХ</div>
<div class="hl" style="left:22px;top:217px;width:10px"></div>
<svg class="ic" style="left:32px;top:209px" width="16" height="16" viewBox="0 0 16 16"><path d="M0.6 1.6 H8 L9.4 3 H15.4 V13.4 H0.6 Z" fill="#ffe400" stroke="#0a3f8f" stroke-width="1.05" stroke-linejoin="round"/><path d="M3.97 1.54 L14.94 11.77 L12.63 14.26 L1.66 4.03 Z M1.66 11.77 L12.63 1.54 L14.94 4.03 L3.97 14.26 Z" fill="#300000" stroke="#300000" stroke-width="1.4" stroke-linejoin="round" opacity=".75"/><path d="M3.97 1.54 L14.94 11.77 L12.63 14.26 L1.66 4.03 Z M1.66 11.77 L12.63 1.54 L14.94 4.03 L3.97 14.26 Z" fill="url(#gx)"/></svg>
<div class="ti" style="left:53px;top:209px">Константы адаптации РХХ</div>
<div class="hl" style="left:4px;top:233px;width:9px"></div>
<svg class="ic" style="left:13px;top:225px" width="16" height="16" viewBox="0 0 16 16"><path d="M0.6 1.6 H8 L9.4 3 H15.4 V13.4 H0.6 Z" fill="#ffe400" stroke="#0a3f8f" stroke-width="1.05" stroke-linejoin="round"/><path d="M3.97 1.54 L14.94 11.77 L12.63 14.26 L1.66 4.03 Z M1.66 11.77 L12.63 1.54 L14.94 4.03 L3.97 14.26 Z" fill="#300000" stroke="#300000" stroke-width="1.4" stroke-linejoin="round" opacity=".75"/><path d="M3.97 1.54 L14.94 11.77 L12.63 14.26 L1.66 4.03 Z M1.66 11.77 L12.63 1.54 L14.94 4.03 L3.97 14.26 Z" fill="url(#gx)"/></svg>
<div class="ti" style="left:34px;top:225px">Прогрев</div>
<div class="hl" style="left:10px;top:249px;width:3px"></div>
<svg class="abs" style="left:1px;top:246px" width="6" height="6" viewBox="0 0 6 6"><path d="M4.8 0.6 V4.8 H0.6 Z" fill="#404040" stroke="#262626" stroke-width=".7" stroke-linejoin="round"/></svg>
<svg class="ic" width="16" height="16" viewBox="0 0 16 16" style="left:13px;top:241px;overflow:visible"><path d="M0.6 1.6 H8 L9.4 3 H15.4 V13.4 H0.6 Z" fill="url(#gfy2)" stroke="#0a3f8f" stroke-width="1.05" stroke-linejoin="round"/><path d="M0.3 6.6 L5.4 8.4 L15 0 L16 0.8 L5.6 15.7 L0.6 7.6 Z" fill="url(#gchk)" stroke="#1c4a10" stroke-width=".7" stroke-linejoin="round"/></svg>
<div class="ti" style="left:34px;top:241px"><span style="letter-spacing:-.22px">Исполнительные механизмы</span></div>
<div class="hl" style="left:22px;top:265px;width:10px"></div>
<svg class="ic" style="left:32px;top:257px" width="16" height="16" viewBox="0 0 16 16"><path d="M0.6 1.6 H8 L9.4 3 H15.4 V13.4 H0.6 Z" fill="#ffe400" stroke="#0a3f8f" stroke-width="1.05" stroke-linejoin="round"/><path d="M3.97 1.54 L14.94 11.77 L12.63 14.26 L1.66 4.03 Z M1.66 11.77 L12.63 1.54 L14.94 4.03 L3.97 14.26 Z" fill="#300000" stroke="#300000" stroke-width="1.4" stroke-linejoin="round" opacity=".75"/><path d="M3.97 1.54 L14.94 11.77 L12.63 14.26 L1.66 4.03 Z M1.66 11.77 L12.63 1.54 L14.94 4.03 L3.97 14.26 Z" fill="url(#gx)"/></svg>
<div class="ti" style="left:53px;top:257px">Форсунки</div>
<div class="hl" style="left:22px;top:281px;width:10px"></div>
<svg class="ic" style="left:32px;top:273px" width="16" height="16" viewBox="0 0 16 16"><path d="M0.6 1.6 H8 L9.4 3 H15.4 V13.4 H0.6 Z" fill="#ffe400" stroke="#0a3f8f" stroke-width="1.05" stroke-linejoin="round"/><path d="M3.97 1.54 L14.94 11.77 L12.63 14.26 L1.66 4.03 Z M1.66 11.77 L12.63 1.54 L14.94 4.03 L3.97 14.26 Z" fill="#300000" stroke="#300000" stroke-width="1.4" stroke-linejoin="round" opacity=".75"/><path d="M3.97 1.54 L14.94 11.77 L12.63 14.26 L1.66 4.03 Z M1.66 11.77 L12.63 1.54 L14.94 4.03 L3.97 14.26 Z" fill="url(#gx)"/></svg>
<div class="ti" style="left:53px;top:273px">Адсорбер</div>
<div class="hl" style="left:22px;top:297px;width:10px"></div>
<svg class="ic" style="left:32px;top:289px" width="16" height="16" viewBox="0 0 16 16"><path d="M0.6 1.6 H8 L9.4 3 H15.4 V13.4 H0.6 Z" fill="#ffe400" stroke="#0a3f8f" stroke-width="1.05" stroke-linejoin="round"/><path d="M3.97 1.54 L14.94 11.77 L12.63 14.26 L1.66 4.03 Z M1.66 11.77 L12.63 1.54 L14.94 4.03 L3.97 14.26 Z" fill="#300000" stroke="#300000" stroke-width="1.4" stroke-linejoin="round" opacity=".75"/><path d="M3.97 1.54 L14.94 11.77 L12.63 14.26 L1.66 4.03 Z M1.66 11.77 L12.63 1.54 L14.94 4.03 L3.97 14.26 Z" fill="url(#gx)"/></svg>
<div class="ti" style="left:53px;top:289px">Вентилятор ОЖ</div>
<div class="hl" style="left:22px;top:313px;width:10px"></div>
<svg class="ic" style="left:32px;top:305px" width="16" height="16" viewBox="0 0 16 16"><path d="M0.6 1.6 H8 L9.4 3 H15.4 V13.4 H0.6 Z" fill="#ffe400" stroke="#0a3f8f" stroke-width="1.05" stroke-linejoin="round"/><path d="M3.97 1.54 L14.94 11.77 L12.63 14.26 L1.66 4.03 Z M1.66 11.77 L12.63 1.54 L14.94 4.03 L3.97 14.26 Z" fill="#300000" stroke="#300000" stroke-width="1.4" stroke-linejoin="round" opacity=".75"/><path d="M3.97 1.54 L14.94 11.77 L12.63 14.26 L1.66 4.03 Z M1.66 11.77 L12.63 1.54 L14.94 4.03 L3.97 14.26 Z" fill="url(#gx)"/></svg>
<div class="ti" style="left:53px;top:305px">Прочее</div>
<div class="hl" style="left:4px;top:329px;width:9px"></div>
<svg class="ic" style="left:13px;top:321px" width="16" height="16" viewBox="0 0 16 16"><path d="M0.6 1.6 H8 L9.4 3 H15.4 V13.4 H0.6 Z" fill="#ffe400" stroke="#0a3f8f" stroke-width="1.05" stroke-linejoin="round"/><path d="M3.97 1.54 L14.94 11.77 L12.63 14.26 L1.66 4.03 Z M1.66 11.77 L12.63 1.54 L14.94 4.03 L3.97 14.26 Z" fill="#300000" stroke="#300000" stroke-width="1.4" stroke-linejoin="round" opacity=".75"/><path d="M3.97 1.54 L14.94 11.77 L12.63 14.26 L1.66 4.03 Z M1.66 11.77 L12.63 1.54 L14.94 4.03 L3.97 14.26 Z" fill="url(#gx)"/></svg>
<div class="ti" style="left:34px;top:321px">Тарировки</div>
<div class="hl" style="left:4px;top:345px;width:9px"></div>
<svg class="ic" style="left:13px;top:337px" width="16" height="16" viewBox="0 0 16 16"><path d="M0.6 1.6 H8 L9.4 3 H15.4 V13.4 H0.6 Z" fill="#ffe400" stroke="#0a3f8f" stroke-width="1.05" stroke-linejoin="round"/><path d="M3.97 1.54 L14.94 11.77 L12.63 14.26 L1.66 4.03 Z M1.66 11.77 L12.63 1.54 L14.94 4.03 L3.97 14.26 Z" fill="#300000" stroke="#300000" stroke-width="1.4" stroke-linejoin="round" opacity=".75"/><path d="M3.97 1.54 L14.94 11.77 L12.63 14.26 L1.66 4.03 Z M1.66 11.77 L12.63 1.54 L14.94 4.03 L3.97 14.26 Z" fill="url(#gx)"/></svg>
<div class="ti" style="left:34px;top:337px">Нейтрализатор</div>
<div class="hl" style="left:4px;top:361px;width:9px"></div>
<svg class="ic" style="left:13px;top:353px" width="16" height="16" viewBox="0 0 16 16"><path d="M0.6 1.6 H8 L9.4 3 H15.4 V13.4 H0.6 Z" fill="#ffe400" stroke="#0a3f8f" stroke-width="1.05" stroke-linejoin="round"/><path d="M3.97 1.54 L14.94 11.77 L12.63 14.26 L1.66 4.03 Z M1.66 11.77 L12.63 1.54 L14.94 4.03 L3.97 14.26 Z" fill="#300000" stroke="#300000" stroke-width="1.4" stroke-linejoin="round" opacity=".75"/><path d="M3.97 1.54 L14.94 11.77 L12.63 14.26 L1.66 4.03 Z M1.66 11.77 L12.63 1.54 L14.94 4.03 L3.97 14.26 Z" fill="url(#gx)"/></svg>
<div class="ti" style="left:34px;top:353px">Неисправности</div>
<div class="hl" style="left:4px;top:377px;width:9px"></div>
<svg class="ic" style="left:13px;top:369px" width="16" height="16" viewBox="0 0 16 16"><path d="M0.6 1.6 H8 L9.4 3 H15.4 V13.4 H0.6 Z" fill="#ffe400" stroke="#0a3f8f" stroke-width="1.05" stroke-linejoin="round"/><path d="M3.97 1.54 L14.94 11.77 L12.63 14.26 L1.66 4.03 Z M1.66 11.77 L12.63 1.54 L14.94 4.03 L3.97 14.26 Z" fill="#300000" stroke="#300000" stroke-width="1.4" stroke-linejoin="round" opacity=".75"/><path d="M3.97 1.54 L14.94 11.77 L12.63 14.26 L1.66 4.03 Z M1.66 11.77 L12.63 1.54 L14.94 4.03 L3.97 14.26 Z" fill="url(#gx)"/></svg>
<div class="ti" style="left:34px;top:369px">Зажигание</div>
<div class="hl" style="left:4px;top:393px;width:9px"></div>
<svg class="ic" style="left:13px;top:385px" width="16" height="16" viewBox="0 0 16 16"><path d="M0.6 1.6 H8 L9.4 3 H15.4 V13.4 H0.6 Z" fill="#ffe400" stroke="#0a3f8f" stroke-width="1.05" stroke-linejoin="round"/><path d="M3.97 1.54 L14.94 11.77 L12.63 14.26 L1.66 4.03 Z M1.66 11.77 L12.63 1.54 L14.94 4.03 L3.97 14.26 Z" fill="#300000" stroke="#300000" stroke-width="1.4" stroke-linejoin="round" opacity=".75"/><path d="M3.97 1.54 L14.94 11.77 L12.63 14.26 L1.66 4.03 Z M1.66 11.77 L12.63 1.54 L14.94 4.03 L3.97 14.26 Z" fill="url(#gx)"/></svg>
<div class="ti" style="left:34px;top:385px">Топливоподача</div>
<div class="hl" style="left:4px;top:409px;width:9px"></div>
<svg class="ic" style="left:13px;top:401px" width="16" height="16" viewBox="0 0 16 16"><path d="M0.6 1.6 H8 L9.4 3 H15.4 V13.4 H0.6 Z" fill="#ffe400" stroke="#0a3f8f" stroke-width="1.05" stroke-linejoin="round"/><path d="M3.97 1.54 L14.94 11.77 L12.63 14.26 L1.66 4.03 Z M1.66 11.77 L12.63 1.54 L14.94 4.03 L3.97 14.26 Z" fill="#300000" stroke="#300000" stroke-width="1.4" stroke-linejoin="round" opacity=".75"/><path d="M3.97 1.54 L14.94 11.77 L12.63 14.26 L1.66 4.03 Z M1.66 11.77 L12.63 1.54 L14.94 4.03 L3.97 14.26 Z" fill="url(#gx)"/></svg>
<div class="ti" style="left:34px;top:401px">Ускорительный насос</div>
<div class="hl" style="left:4px;top:425px;width:9px"></div>
<svg class="ic" style="left:13px;top:417px" width="16" height="16" viewBox="0 0 16 16"><path d="M0.6 1.6 H8 L9.4 3 H15.4 V13.4 H0.6 Z" fill="#ffe400" stroke="#0a3f8f" stroke-width="1.05" stroke-linejoin="round"/><path d="M3.97 1.54 L14.94 11.77 L12.63 14.26 L1.66 4.03 Z M1.66 11.77 L12.63 1.54 L14.94 4.03 L3.97 14.26 Z" fill="#300000" stroke="#300000" stroke-width="1.4" stroke-linejoin="round" opacity=".75"/><path d="M3.97 1.54 L14.94 11.77 L12.63 14.26 L1.66 4.03 Z M1.66 11.77 L12.63 1.54 L14.94 4.03 L3.97 14.26 Z" fill="url(#gx)"/></svg>
<div class="ti" style="left:34px;top:417px">Лямбда-зонд и регулирование</div>
<div class="hl" style="left:4px;top:441px;width:9px"></div>
<svg class="ic" style="left:13px;top:433px" width="16" height="16" viewBox="0 0 16 16"><path d="M0.6 1.6 H8 L9.4 3 H15.4 V13.4 H0.6 Z" fill="#ffe400" stroke="#0a3f8f" stroke-width="1.05" stroke-linejoin="round"/><path d="M3.97 1.54 L14.94 11.77 L12.63 14.26 L1.66 4.03 Z M1.66 11.77 L12.63 1.54 L14.94 4.03 L3.97 14.26 Z" fill="#300000" stroke="#300000" stroke-width="1.4" stroke-linejoin="round" opacity=".75"/><path d="M3.97 1.54 L14.94 11.77 L12.63 14.26 L1.66 4.03 Z M1.66 11.77 L12.63 1.54 L14.94 4.03 L3.97 14.26 Z" fill="url(#gx)"/></svg>
<div class="ti" style="left:34px;top:433px">Детонация&amp;Пропуски</div>
<div class="hl" style="left:4px;top:457px;width:9px"></div>
<svg class="ic" style="left:13px;top:449px" width="16" height="16" viewBox="0 0 16 16"><path d="M0.6 1.6 H8 L9.4 3 H15.4 V13.4 H0.6 Z" fill="#ffe400" stroke="#0a3f8f" stroke-width="1.05" stroke-linejoin="round"/><path d="M3.97 1.54 L14.94 11.77 L12.63 14.26 L1.66 4.03 Z M1.66 11.77 L12.63 1.54 L14.94 4.03 L3.97 14.26 Z" fill="#300000" stroke="#300000" stroke-width="1.4" stroke-linejoin="round" opacity=".75"/><path d="M3.97 1.54 L14.94 11.77 L12.63 14.26 L1.66 4.03 Z M1.66 11.77 L12.63 1.54 L14.94 4.03 L3.97 14.26 Z" fill="url(#gx)"/></svg>
<div class="ti" style="left:34px;top:449px">Прочее</div>
<div class="hl" style="left:4px;top:473px;width:9px"></div>
<svg class="ic" style="left:13px;top:465px" width="16" height="16" viewBox="0 0 16 16"><path d="M0.6 1.6 H8 L9.4 3 H15.4 V13.4 H0.6 Z" fill="#ffe400" stroke="#0a3f8f" stroke-width="1.05" stroke-linejoin="round"/><path d="M3.97 1.54 L14.94 11.77 L12.63 14.26 L1.66 4.03 Z M1.66 11.77 L12.63 1.54 L14.94 4.03 L3.97 14.26 Z" fill="#300000" stroke="#300000" stroke-width="1.4" stroke-linejoin="round" opacity=".75"/><path d="M3.97 1.54 L14.94 11.77 L12.63 14.26 L1.66 4.03 Z M1.66 11.77 L12.63 1.54 L14.94 4.03 L3.97 14.26 Z" fill="url(#gx)"/></svg>
<div class="ti" style="left:34px;top:465px">Идетификатор</div>
<div class="vl" style="left:21px;top:97px;height:25px"></div>
<div class="vl" style="left:21px;top:145px;height:73px"></div>
<div class="vl" style="left:21px;top:257px;height:57px"></div>
</div>
<div id="list" class="abs">
<div class="hd" style="left:0px;width:300px;border-left:1px solid #fff;padding-left:5px">Название параметра</div>
<div class="hd" style="left:300px;width:100px">Значение</div>
<div class="hd" style="left:400px;width:100px">Единицы изме<span class="el" style="margin-left:.5px">...</span></div>
<div class="hd" style="left:500px;width:200px">Зависимость</div>
<div class="hd" style="left:700px;width:100px;padding-left:6px">А</div>
<div class="row" style="top:25px">
<svg class="li" width="16" height="16" viewBox="0 0 16 16"><circle cx="8" cy="8" r="7.3" fill="#9aa39a" opacity=".6"/><circle cx="8" cy="8" r="6.8" fill="url(#gp)" stroke="#2a7212" stroke-width="1"/><path d="M8 4.2 V11.8 M4.2 8 H11.8" stroke="#fff" stroke-width="2.1"/></svg>
<div class="c" style="left:21px;width:278px;padding-left:1px">Датчик барометрической коррекции</div>
<div class="c" style="left:301px;width:98px;padding-left:5px">Включено</div>
<div class="c" style="left:401px;width:98px;padding-left:5px"></div>
<div class="c" style="left:501px;width:198px;padding-left:6px"><span style="position:relative;top:-1px">-</span></div>
<div class="c" style="left:701px;width:98px;padding-left:6px">5</div>
</div>
<div class="row alt" style="top:42px">
<svg class="li" width="16" height="16" viewBox="0 0 16 16"><circle cx="8" cy="8" r="7.3" fill="#9aa39a" opacity=".6"/><circle cx="8" cy="8" r="6.8" fill="url(#gp)" stroke="#2a7212" stroke-width="1"/><path d="M8 4.2 V11.8 M4.2 8 H11.8" stroke="#fff" stroke-width="2.1"/></svg>
<div class="c" style="left:21px;width:278px;padding-left:1px">Расходомер воздуха</div>
<div class="c" style="left:301px;width:98px;padding-left:5px">Выключено</div>
<div class="c" style="left:401px;width:98px;padding-left:5px"></div>
<div class="c" style="left:501px;width:198px;padding-left:6px"><span style="position:relative;top:-1px">-</span></div>
<div class="c" style="left:701px;width:98px;padding-left:6px">5</div>
</div>
<div class="row" style="top:59px">
<svg class="li" width="16" height="16" viewBox="0 0 16 16"><circle cx="8" cy="8" r="7.3" fill="#9aa39a" opacity=".6"/><circle cx="8" cy="8" r="6.8" fill="url(#gp)" stroke="#2a7212" stroke-width="1"/><path d="M8 4.2 V11.8 M4.2 8 H11.8" stroke="#fff" stroke-width="2.1"/></svg>
<div class="c" style="left:21px;width:278px;padding-left:1px">Датчик абсолютного давления</div>
<div class="c" style="left:301px;width:98px;padding-left:5px">Включено</div>
<div class="c" style="left:401px;width:98px;padding-left:5px"></div>
<div class="c" style="left:501px;width:198px;padding-left:6px"><span style="position:relative;top:-1px">-</span></div>
<div class="c" style="left:701px;width:98px;padding-left:6px">5</div>
</div>
<div class="row alt" style="top:76px">
<svg class="li" width="16" height="16" viewBox="0 0 16 16"><circle cx="8" cy="8" r="7.3" fill="#9aa39a" opacity=".6"/><circle cx="8" cy="8" r="6.8" fill="url(#gp)" stroke="#2a7212" stroke-width="1"/><path d="M8 4.2 V11.8 M4.2 8 H11.8" stroke="#fff" stroke-width="2.1"/></svg>
<div class="c" style="left:21px;width:278px;padding-left:1px">Датчик температуры ОЖ</div>
<div class="c" style="left:301px;width:98px;padding-left:5px">Включено</div>
<div class="c" style="left:401px;width:98px;padding-left:5px"></div>
<div class="c" style="left:501px;width:198px;padding-left:6px"><span style="position:relative;top:-1px">-</span></div>
<div class="c" style="left:701px;width:98px;padding-left:6px">5</div>
</div>
<div class="row" style="top:93px">
<svg class="li" width="16" height="16" viewBox="0 0 16 16"><circle cx="8" cy="8" r="7.3" fill="#9aa39a" opacity=".6"/><circle cx="8" cy="8" r="6.8" fill="url(#gp)" stroke="#2a7212" stroke-width="1"/><path d="M8 4.2 V11.8 M4.2 8 H11.8" stroke="#fff" stroke-width="2.1"/></svg>
<div class="c" style="left:21px;width:278px;padding-left:1px">Датчик температуры воздуха</div>
<div class="c" style="left:301px;width:98px;padding-left:5px">Включено</div>
<div class="c" style="left:401px;width:98px;padding-left:5px"></div>
<div class="c" style="left:501px;width:198px;padding-left:6px"><span style="position:relative;top:-1px">-</span></div>
<div class="c" style="left:701px;width:98px;padding-left:6px">5</div>
</div>
<div class="row alt" style="top:110px">
<svg class="li" width="16" height="16" viewBox="0 0 16 16"><circle cx="8" cy="8" r="7.3" fill="#9aa39a" opacity=".6"/><circle cx="8" cy="8" r="6.8" fill="url(#gp)" stroke="#2a7212" stroke-width="1"/><path d="M8 4.2 V11.8 M4.2 8 H11.8" stroke="#fff" stroke-width="2.1"/></svg>
<div class="c" style="left:21px;width:278px;padding-left:1px">Датчик фазы</div>
<div class="c" style="left:301px;width:98px;padding-left:5px">Включено</div>
<div class="c" style="left:401px;width:98px;padding-left:5px"></div>
<div class="c" style="left:501px;width:198px;padding-left:6px"><span style="position:relative;top:-1px">-</span></div>
<div class="c" style="left:701px;width:98px;padding-left:6px">5</div>
</div>
<div class="row" style="top:127px">
<svg class="li" width="16" height="16" viewBox="0 0 16 16"><circle cx="8" cy="8" r="7.3" fill="#9aa39a" opacity=".6"/><circle cx="8" cy="8" r="6.8" fill="url(#gp)" stroke="#2a7212" stroke-width="1"/><path d="M8 4.2 V11.8 M4.2 8 H11.8" stroke="#fff" stroke-width="2.1"/></svg>
<div class="c" style="left:21px;width:278px;padding-left:1px">Датчик температуры конструкции двигателя</div>
<div class="c" style="left:301px;width:98px;padding-left:5px">Выключено</div>
<div class="c" style="left:401px;width:98px;padding-left:5px"></div>
<div class="c" style="left:501px;width:198px;padding-left:6px"><span style="position:relative;top:-1px">-</span></div>
<div class="c" style="left:701px;width:98px;padding-left:6px">5</div>
</div>
<div class="row alt" style="top:144px">
<svg class="li" width="16" height="16" viewBox="0 0 16 16"><circle cx="8" cy="8" r="7.3" fill="#9aa39a" opacity=".6"/><circle cx="8" cy="8" r="6.8" fill="url(#gp)" stroke="#2a7212" stroke-width="1"/><path d="M8 4.2 V11.8 M4.2 8 H11.8" stroke="#fff" stroke-width="2.1"/></svg>
<div class="c" style="left:21px;width:278px;padding-left:1px">Датчик скорости автомобиля</div>
<div class="c" style="left:301px;width:98px;padding-left:5px">Включено</div>
<div class="c" style="left:401px;width:98px;padding-left:5px"></div>
<div class="c" style="left:501px;width:198px;padding-left:6px"><span style="position:relative;top:-1px">-</span></div>
<div class="c" style="left:701px;width:98px;padding-left:6px">5</div>
</div>
<div class="row" style="top:161px">
<svg class="li" width="16" height="16" viewBox="0 0 16 16"><circle cx="8" cy="8" r="7.3" fill="#9aa39a" opacity=".6"/><circle cx="8" cy="8" r="6.8" fill="url(#gp)" stroke="#2a7212" stroke-width="1"/><path d="M8 4.2 V11.8 M4.2 8 H11.8" stroke="#fff" stroke-width="2.1"/></svg>
<div class="c" style="left:21px;width:278px;padding-left:1px">Датчик положения дросселя</div>
<div class="c" style="left:301px;width:98px;padding-left:5px">Включено</div>
<div class="c" style="left:401px;width:98px;padding-left:5px"></div>
<div class="c" style="left:501px;width:198px;padding-left:6px"><span style="position:relative;top:-1px">-</span></div>
<div class="c" style="left:701px;width:98px;padding-left:6px">5</div>
</div>
<div class="row alt" style="top:178px">
<svg class="li" width="16" height="16" viewBox="0 0 16 16"><circle cx="8" cy="8" r="7.3" fill="#9aa39a" opacity=".6"/><circle cx="8" cy="8" r="6.8" fill="url(#gp)" stroke="#2a7212" stroke-width="1"/><path d="M8 4.2 V11.8 M4.2 8 H11.8" stroke="#fff" stroke-width="2.1"/></svg>
<div class="c" style="left:21px;width:278px;padding-left:1px">Линейный датчик кислорода #1</div>
<div class="c" style="left:301px;width:98px;padding-left:5px">Выключено</div>
<div class="c" style="left:401px;width:98px;padding-left:5px"></div>
<div class="c" style="left:501px;width:198px;padding-left:6px"><span style="position:relative;top:-1px">-</span></div>
<div class="c" style="left:701px;width:98px;padding-left:6px">5</div>
</div>
<div class="row" style="top:195px">
<svg class="li" width="16" height="16" viewBox="0 0 16 16"><circle cx="8" cy="8" r="7.3" fill="#a09a9a" opacity=".6"/><circle cx="8" cy="8" r="6.8" fill="url(#gm)" stroke="#820808" stroke-width="1"/><path d="M4 8 H12" stroke="#fff" stroke-width="2.2"/></svg>
<div class="c" style="left:21px;width:278px;padding-left:1px">Датчик кислорода #1 (лямбда-зонд #1)</div>
<div class="c" style="left:301px;width:98px;padding-left:5px">Выключено / <span class="el">...</span></div>
<div class="c" style="left:401px;width:98px;padding-left:5px"></div>
<div class="c" style="left:501px;width:198px;padding-left:6px"><span style="position:relative;top:-1px">-</span></div>
<div class="c" style="left:701px;width:98px;padding-left:6px">5</div>
</div>
<div class="row alt" style="top:212px">
<svg class="li" width="16" height="16" viewBox="0 0 16 16"><circle cx="8" cy="8" r="7.3" fill="#9aa39a" opacity=".6"/><circle cx="8" cy="8" r="6.8" fill="url(#gp)" stroke="#2a7212" stroke-width="1"/><path d="M8 4.2 V11.8 M4.2 8 H11.8" stroke="#fff" stroke-width="2.1"/></svg>
<div class="c" style="left:21px;width:278px;padding-left:1px">Датчик кислорода #2 (лямбда-зонд #2)</div>
<div class="c" style="left:301px;width:98px;padding-left:5px">Выключено</div>
<div class="c" style="left:401px;width:98px;padding-left:5px"></div>
<div class="c" style="left:501px;width:198px;padding-left:6px"><span style="position:relative;top:-1px">-</span></div>
<div class="c" style="left:701px;width:98px;padding-left:6px">5</div>
</div>
<div class="row" style="top:229px">
<svg class="li" width="16" height="16" viewBox="0 0 16 16"><circle cx="8" cy="8" r="7.3" fill="#9aa39a" opacity=".6"/><circle cx="8" cy="8" r="6.8" fill="url(#gp)" stroke="#2a7212" stroke-width="1"/><path d="M8 4.2 V11.8 M4.2 8 H11.8" stroke="#fff" stroke-width="2.1"/></svg>
<div class="c" style="left:21px;width:278px;padding-left:1px">Датчик детонации</div>
<div class="c" style="left:301px;width:98px;padding-left:5px">Включено</div>
<div class="c" style="left:401px;width:98px;padding-left:5px"></div>
<div class="c" style="left:501px;width:198px;padding-left:6px"><span style="position:relative;top:-1px">-</span></div>
<div class="c" style="left:701px;width:98px;padding-left:6px">5</div>
</div>
<div class="row alt" style="top:246px">
<svg class="li" width="16" height="16" viewBox="0 0 16 16"><circle cx="8" cy="8" r="7.3" fill="#a09a9a" opacity=".6"/><circle cx="8" cy="8" r="6.8" fill="url(#gm)" stroke="#820808" stroke-width="1"/><path d="M4 8 H12" stroke="#fff" stroke-width="2.2"/></svg>
<div class="c" style="left:21px;width:278px;padding-left:1px">Планарные датчики кислорода</div>
<div class="c" style="left:301px;width:98px;padding-left:5px">Выключено / <span class="el">...</span></div>
<div class="c" style="left:401px;width:98px;padding-left:5px"></div>
<div class="c" style="left:501px;width:198px;padding-left:6px"><span style="position:relative;top:-1px">-</span></div>
<div class="c" style="left:701px;width:98px;padding-left:6px">5</div>
</div>
<div class="row" style="top:263px">
<svg class="li" width="16" height="16" viewBox="0 0 16 16"><circle cx="8" cy="8" r="7.3" fill="#9aa39a" opacity=".6"/><circle cx="8" cy="8" r="6.8" fill="url(#gp)" stroke="#2a7212" stroke-width="1"/><path d="M8 4.2 V11.8 M4.2 8 H11.8" stroke="#fff" stroke-width="2.1"/></svg>
<div class="c" style="left:21px;width:278px;padding-left:1px">Переключатель таблиц</div>
<div class="c" style="left:301px;width:98px;padding-left:5px">Выключено</div>
<div class="c" style="left:401px;width:98px;padding-left:5px"></div>
<div class="c" style="left:501px;width:198px;padding-left:6px"><span style="position:relative;top:-1px">-</span></div>
<div class="c" style="left:701px;width:98px;padding-left:6px">5</div>
</div>
<div class="row alt" style="top:280px">
<svg class="li" width="16" height="16" viewBox="0 0 16 16"><circle cx="8" cy="8" r="7.3" fill="#9aa39a" opacity=".6"/><circle cx="8" cy="8" r="6.8" fill="url(#gp)" stroke="#2a7212" stroke-width="1"/><path d="M8 4.2 V11.8 M4.2 8 H11.8" stroke="#fff" stroke-width="2.1"/></svg>
<div class="c" style="left:21px;width:278px;padding-left:1px">Датчик неровной дороги</div>
<div class="c" style="left:301px;width:98px;padding-left:5px">Выключено</div>
<div class="c" style="left:401px;width:98px;padding-left:5px"></div>
<div class="c" style="left:501px;width:198px;padding-left:6px"><span style="position:relative;top:-1px">-</span></div>
<div class="c" style="left:701px;width:98px;padding-left:6px">5</div>
</div>
<div class="row" style="top:297px">
<svg class="li" width="16" height="16" viewBox="0 0 16 16"><circle cx="8" cy="8" r="7.3" fill="#9aa39a" opacity=".6"/><circle cx="8" cy="8" r="6.8" fill="url(#gp)" stroke="#2a7212" stroke-width="1"/><path d="M8 4.2 V11.8 M4.2 8 H11.8" stroke="#fff" stroke-width="2.1"/></svg>
<div class="c" style="left:21px;width:278px;padding-left:1px">Клапан рециркуляции</div>
<div class="c" style="left:301px;width:98px;padding-left:5px">Выключено</div>
<div class="c" style="left:401px;width:98px;padding-left:5px"></div>
<div class="c" style="left:501px;width:198px;padding-left:6px"><span style="position:relative;top:-1px">-</span></div>
<div class="c" style="left:701px;width:98px;padding-left:6px">5</div>
</div>
<div class="row alt" style="top:314px">
<svg class="li" width="16" height="16" viewBox="0 0 16 16"><circle cx="8" cy="8" r="7.3" fill="#9aa39a" opacity=".6"/><circle cx="8" cy="8" r="6.8" fill="url(#gp)" stroke="#2a7212" stroke-width="1"/><path d="M8 4.2 V11.8 M4.2 8 H11.8" stroke="#fff" stroke-width="2.1"/></svg>
<div class="c" style="left:21px;width:278px;padding-left:1px">Реле вентилятора #2</div>
<div class="c" style="left:301px;width:98px;padding-left:5px">Выключено</div>
<div class="c" style="left:401px;width:98px;padding-left:5px"></div>
<div class="c" style="left:501px;width:198px;padding-left:6px"><span style="position:relative;top:-1px">-</span></div>
<div class="c" style="left:701px;width:98px;padding-left:6px">5</div>
</div>
<div class="row" style="top:331px">
<svg class="li" width="16" height="16" viewBox="0 0 16 16"><circle cx="8" cy="8" r="7.3" fill="#a09a9a" opacity=".6"/><circle cx="8" cy="8" r="6.8" fill="url(#gm)" stroke="#820808" stroke-width="1"/><path d="M4 8 H12" stroke="#fff" stroke-width="2.2"/></svg>
<div class="c" style="left:21px;width:278px;padding-left:1px">Клапан адсорбера</div>
<div class="c" style="left:301px;width:98px;padding-left:5px">Выключено / <span class="el">...</span></div>
<div class="c" style="left:401px;width:98px;padding-left:5px"></div>
<div class="c" style="left:501px;width:198px;padding-left:6px"><span style="position:relative;top:-1px">-</span></div>
<div class="c" style="left:701px;width:98px;padding-left:6px">5</div>
</div>
<div class="row alt" style="top:348px">
<svg class="li" width="16" height="16" viewBox="0 0 16 16"><circle cx="8" cy="8" r="7.3" fill="#a09a9a" opacity=".6"/><circle cx="8" cy="8" r="6.8" fill="url(#gm)" stroke="#820808" stroke-width="1"/><path d="M4 8 H12" stroke="#fff" stroke-width="2.2"/></svg>
<div class="c" style="left:21px;width:278px;padding-left:1px">Реле кондиционера</div>
<div class="c" style="left:301px;width:98px;padding-left:5px">Включено / В<span class="el">...</span></div>
<div class="c" style="left:401px;width:98px;padding-left:5px"></div>
<div class="c" style="left:501px;width:198px;padding-left:6px"><span style="position:relative;top:-1px">-</span></div>
<div class="c" style="left:701px;width:98px;padding-left:6px">5</div>
</div>
<div class="row" style="top:365px">
<div class="abs" style="left:1px;top:0;width:730px;height:17px;background:linear-gradient(#eef4fd,#d6e4f7);border-radius:3px;border:1px solid #b2cef2"></div><div class="hl" style="left:3px;top:1px;width:740px;background-image:linear-gradient(90deg,#000 50%,transparent 50%)"></div><div class="hl" style="left:3px;top:15px;width:740px;background-image:linear-gradient(90deg,#000 50%,transparent 50%)"></div><div class="vl" style="left:2px;top:2px;height:13px;background-image:linear-gradient(#000 50%,transparent 50%)"></div>
<svg class="li" width="16" height="16" viewBox="0 0 16 16"><circle cx="8" cy="8" r="7.3" fill="#9aa39a" opacity=".6"/><circle cx="8" cy="8" r="6.8" fill="url(#gp)" stroke="#2a7212" stroke-width="1"/><path d="M8 4.2 V11.8 M4.2 8 H11.8" stroke="#fff" stroke-width="2.1"/></svg>
<div class="c" style="left:21px;width:278px;padding-left:1px;background:none">Реле топливного насоса</div>
<div class="c" style="left:301px;width:98px;padding-left:5px;background:none">Выключено</div>
<div class="c" style="left:401px;width:98px;padding-left:5px;background:none"></div>
<div class="c" style="left:501px;width:198px;padding-left:6px;background:none"><span style="position:relative;top:-1px">-</span></div>
<div class="c" style="left:701px;width:98px;padding-left:6px;background:none">5</div>
</div>
<div class="row alt" style="top:382px">
<svg class="li" width="16" height="16" viewBox="0 0 16 16"><circle cx="8" cy="8" r="7.3" fill="#a09a9a" opacity=".6"/><circle cx="8" cy="8" r="6.8" fill="url(#gm)" stroke="#820808" stroke-width="1"/><path d="M4 8 H12" stroke="#fff" stroke-width="2.2"/></svg>
<div class="c" style="left:21px;width:278px;padding-left:1px">Реле вентилятора #1</div>
<div class="c" style="left:301px;width:98px;padding-left:5px">Выключено / <span class="el">...</span></div>
<div class="c" style="left:401px;width:98px;padding-left:5px"></div>
<div class="c" style="left:501px;width:198px;padding-left:6px"><span style="position:relative;top:-1px">-</span></div>
<div class="c" style="left:701px;width:98px;padding-left:6px">5</div>
</div>
<div class="row" style="top:399px">
<div class="abs" style="left:1px;top:0;width:730px;height:17px;background:linear-gradient(#fafcff,#eef5fd);border:1px solid #b8d6fb;border-radius:2px"></div>
<svg class="li" width="16" height="16" viewBox="0 0 16 16"><circle cx="8" cy="8" r="7.3" fill="#9aa39a" opacity=".6"/><circle cx="8" cy="8" r="6.8" fill="url(#gp)" stroke="#2a7212" stroke-width="1"/><path d="M8 4.2 V11.8 M4.2 8 H11.8" stroke="#fff" stroke-width="2.1"/></svg>
<div class="c" style="left:21px;width:278px;padding-left:1px;background:none">Привод ШД (РХХ)</div>
<div class="c" style="left:301px;width:98px;padding-left:5px;background:none">Включено</div>
<div class="c" style="left:401px;width:98px;padding-left:5px;background:none"></div>
<div class="c" style="left:501px;width:198px;padding-left:6px;background:none"><span style="position:relative;top:-1px">-</span></div>
<div class="c" style="left:701px;width:98px;padding-left:6px;background:none">5</div>
</div>
<div class="row alt" style="top:416px">
<svg class="li" width="16" height="16" viewBox="0 0 16 16"><circle cx="8" cy="8" r="7.3" fill="#9aa39a" opacity=".6"/><circle cx="8" cy="8" r="6.8" fill="url(#gp)" stroke="#2a7212" stroke-width="1"/><path d="M8 4.2 V11.8 M4.2 8 H11.8" stroke="#fff" stroke-width="2.1"/></svg>
<div class="c" style="left:21px;width:278px;padding-left:1px">Выход <span style="letter-spacing:1.1px">FCI</span></div>
<div class="c" style="left:301px;width:98px;padding-left:5px">Выключено</div>
<div class="c" style="left:401px;width:98px;padding-left:5px"></div>
<div class="c" style="left:501px;width:198px;padding-left:6px"><span style="position:relative;top:-1px">-</span></div>
<div class="c" style="left:701px;width:98px;padding-left:6px">5</div>
</div>
<div class="row" style="top:433px">
<svg class="li" width="16" height="16" viewBox="0 0 16 16"><circle cx="8" cy="8" r="7.3" fill="#9aa39a" opacity=".6"/><circle cx="8" cy="8" r="6.8" fill="url(#gp)" stroke="#2a7212" stroke-width="1"/><path d="M8 4.2 V11.8 M4.2 8 H11.8" stroke="#fff" stroke-width="2.1"/></svg>
<div class="c" style="left:21px;width:278px;padding-left:1px">Выход <span style="letter-spacing:.4px">СТАХ</span></div>
<div class="c" style="left:301px;width:98px;padding-left:5px">Включено</div>
<div class="c" style="left:401px;width:98px;padding-left:5px"></div>
<div class="c" style="left:501px;width:198px;padding-left:6px"><span style="position:relative;top:-1px">-</span></div>
<div class="c" style="left:701px;width:98px;padding-left:6px">5</div>
</div>
<div class="row alt" style="top:450px">
<svg class="li" width="16" height="16" viewBox="0 0 16 16"><circle cx="8" cy="8" r="7.3" fill="#9aa39a" opacity=".6"/><circle cx="8" cy="8" r="6.8" fill="url(#gp)" stroke="#2a7212" stroke-width="1"/><path d="M8 4.2 V11.8 M4.2 8 H11.8" stroke="#fff" stroke-width="2.1"/></svg>
<div class="c" style="left:21px;width:278px;padding-left:1px">Привод МД</div>
<div class="c" style="left:301px;width:98px;padding-left:5px">Выключено</div>
<div class="c" style="left:401px;width:98px;padding-left:5px"></div>
<div class="c" style="left:501px;width:198px;padding-left:6px"><span style="position:relative;top:-1px">-</span></div>
<div class="c" style="left:701px;width:98px;padding-left:6px">5</div>
</div>
<div class="row" style="top:467px">
<svg class="li" width="16" height="16" viewBox="0 0 16 16"><circle cx="8" cy="8" r="7.3" fill="#9aa39a" opacity=".6"/><circle cx="8" cy="8" r="6.8" fill="url(#gp)" stroke="#2a7212" stroke-width="1"/><path d="M8 4.2 V11.8 M4.2 8 H11.8" stroke="#fff" stroke-width="2.1"/></svg>
<div class="c" style="left:21px;width:278px;padding-left:1px">ЕТ(привод дросселя)</div>
<div class="c" style="left:301px;width:98px;padding-left:5px">Выключено</div>
<div class="c" style="left:401px;width:98px;padding-left:5px"></div>
<div class="c" style="left:501px;width:198px;padding-left:6px"><span style="position:relative;top:-1px">-</span></div>
<div class="c" style="left:701px;width:98px;padding-left:6px">5</div>
</div>
<div class="row alt" style="top:484px">
<svg class="li" width="16" height="16" viewBox="0 0 16 16"><circle cx="8" cy="8" r="7.3" fill="#a09a9a" opacity=".6"/><circle cx="8" cy="8" r="6.8" fill="url(#gm)" stroke="#820808" stroke-width="1"/><path d="M4 8 H12" stroke="#fff" stroke-width="2.2"/></svg>
<div class="c" style="left:21px;width:278px;padding-left:1px"><span style="letter-spacing:-.03px">Реле подогревателя патрубка</span></div>
<div class="c" style="left:301px;width:98px;padding-left:5px">Выключено / <span class="el">...</span></div>
<div class="c" style="left:401px;width:98px;padding-left:5px"></div>
<div class="c" style="left:501px;width:198px;padding-left:6px"><span style="position:relative;top:-1px">-</span></div>
<div class="c" style="left:701px;width:98px;padding-left:6px">5</div>
</div>
<div class="row" style="top:501px">
<svg class="li" width="16" height="16" viewBox="0 0 16 16"><circle cx="8" cy="8" r="7.3" fill="#9aa39a" opacity=".6"/><circle cx="8" cy="8" r="6.8" fill="url(#gp)" stroke="#2a7212" stroke-width="1"/><path d="M8 4.2 V11.8 M4.2 8 H11.8" stroke="#fff" stroke-width="2.1"/></svg>
<div class="c" style="left:21px;width:278px;padding-left:1px">Лампа CHECK ENGINE</div>
<div class="c" style="left:301px;width:98px;padding-left:5px">Включено</div>
<div class="c" style="left:401px;width:98px;padding-left:5px"></div>
<div class="c" style="left:501px;width:198px;padding-left:6px"><span style="position:relative;top:-1px">-</span></div>
<div class="c" style="left:701px;width:98px;padding-left:6px">5</div>
</div>
<div class="row alt" style="top:518px">
<svg class="li" width="16" height="16" viewBox="0 0 16 16"><circle cx="8" cy="8" r="7.3" fill="#9aa39a" opacity=".6"/><circle cx="8" cy="8" r="6.8" fill="url(#gp)" stroke="#2a7212" stroke-width="1"/><path d="M8 4.2 V11.8 M4.2 8 H11.8" stroke="#fff" stroke-width="2.1"/></svg>
<div class="c" style="left:21px;width:278px;padding-left:1px">Реле блокировки стартера</div>
<div class="c" style="left:301px;width:98px;padding-left:5px">Выключено</div>
<div class="c" style="left:401px;width:98px;padding-left:5px"></div>
<div class="c" style="left:501px;width:198px;padding-left:6px"><span style="position:relative;top:-1px">-</span></div>
<div class="c" style="left:701px;width:98px;padding-left:6px">5</div>
</div>
</div>
</body></html>
